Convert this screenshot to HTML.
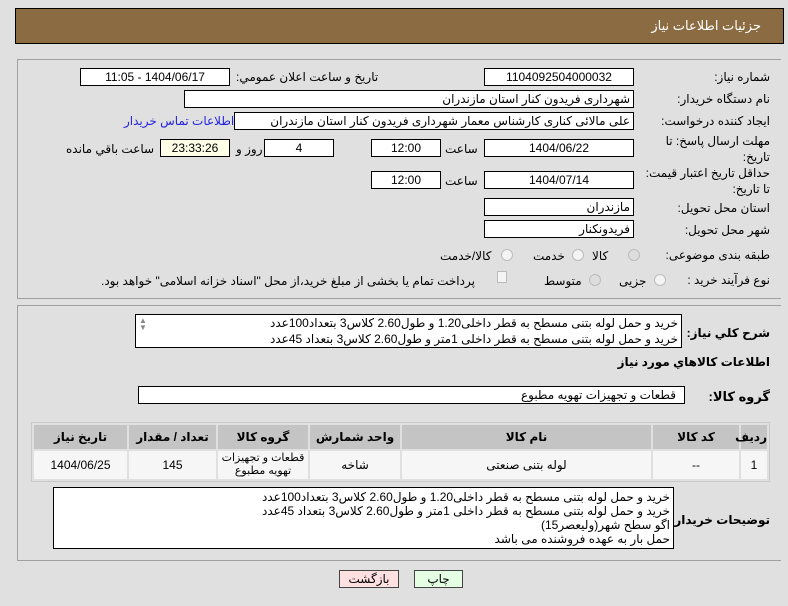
<!DOCTYPE html>
<html><head><meta charset="utf-8"><style>
*{margin:0;padding:0;box-sizing:border-box}
body{width:788px;height:606px;background:#e0e0e0;font-family:Tahoma,"Liberation Sans","DejaVu Sans",sans-serif;font-size:12px;color:#000;position:relative;overflow:hidden;direction:rtl}
.a{position:absolute;white-space:nowrap}
.hdr{left:15px;top:8px;width:769px;height:36px;background:#8b6b42;border:1px solid #000}
.hdr span{position:absolute;right:22px;top:9px;color:#fff;font-size:13px}
.pn{position:absolute;left:17px;width:764px;border:1px solid #a0a0a0;border-right:none}
.bx{position:absolute;background:#fff;border:1px solid #000;height:18px;line-height:16px;padding:0 3px;white-space:nowrap;overflow:hidden}
.c{text-align:center}
.lb{position:absolute;white-space:nowrap;right:18px}
.rd{position:absolute;width:12px;height:12px;border-radius:50%;border:1px solid #bbb;background:#f4f4f4}
table{position:absolute;left:31px;top:422px;width:739px;border-collapse:separate;border-spacing:2px;background:#e0e0e0;border:1px solid #c8c8c8;table-layout:fixed}
th{background:#c4c4c4;height:24px;font-weight:bold;font-size:12px;padding:0}
td{background:#f6f6f6;height:28px;text-align:center;font-size:12px;line-height:14px;padding:0;overflow:hidden}
.ta{position:absolute;background:#fff;border:1px solid #000;padding:1px 3px;line-height:16px;white-space:nowrap;overflow:hidden}
.btn{position:absolute;height:18px;border:1px solid #444;text-align:center;line-height:16px}
</style></head><body>
<div class="a hdr"><span>جزئیات اطلاعات نیاز</span></div>
<div class="pn" style="top:59px;height:240px"></div>
<div class="pn" style="top:305px;height:256px"></div>

<div class="lb" style="top:70px">شماره نیاز:</div>
<div class="bx c" style="left:484px;top:68px;width:150px">1104092504000032</div>
<div class="a" style="left:236px;top:70px">تاريخ و ساعت اعلان عمومي:</div>
<div class="bx c" style="left:80px;top:68px;width:150px">1404/06/17 - 11:05</div>

<div class="lb" style="top:92px">نام دستگاه خریدار:</div>
<div class="bx" style="left:184px;top:90px;width:450px;text-align:right">شهرداری فریدون کنار استان مازندران</div>

<div class="lb" style="top:114px">ایجاد کننده درخواست:</div>
<div class="bx" style="left:234px;top:112px;width:400px;text-align:right">علی مالائی کناری کارشناس معمار شهرداری فریدون کنار استان مازندران</div>
<div class="a" style="left:124px;top:114px;color:#2323e0">اطلاعات تماس خریدار</div>

<div class="lb" style="top:134px">مهلت ارسال پاسخ: تا</div>
<div class="lb" style="top:150px">تاریخ:</div>
<div class="bx c" style="left:484px;top:139px;width:150px">1404/06/22</div>
<div class="a" style="left:445px;top:142px">ساعت</div>
<div class="bx c" style="left:371px;top:139px;width:70px">12:00</div>
<div class="bx c" style="left:264px;top:139px;width:70px">4</div>
<div class="a" style="left:236px;top:142px">روز و</div>
<div class="bx c" style="left:160px;top:139px;width:70px;background:#ffffe8">23:33:26</div>
<div class="a" style="left:66px;top:142px">ساعت باقي مانده</div>

<div class="lb" style="top:166px">حداقل تاریخ اعتبار قیمت:</div>
<div class="lb" style="top:182px">تا تاریخ:</div>
<div class="bx c" style="left:484px;top:171px;width:150px">1404/07/14</div>
<div class="a" style="left:445px;top:174px">ساعت</div>
<div class="bx c" style="left:371px;top:171px;width:70px">12:00</div>

<div class="lb" style="top:201px">استان محل تحویل:</div>
<div class="bx" style="left:484px;top:198px;width:150px;text-align:right">مازندران</div>
<div class="lb" style="top:223px">شهر محل تحویل:</div>
<div class="bx" style="left:484px;top:220px;width:150px;text-align:right">فریدونکنار</div>

<div class="lb" style="top:248px">طبقه بندی موضوعی:</div>
<div class="rd" style="left:628px;top:249px;background:#ddd"></div>
<div class="a" style="left:592px;top:249px">کالا</div>
<div class="rd" style="left:572px;top:249px"></div>
<div class="a" style="left:533px;top:249px">خدمت</div>
<div class="rd" style="left:501px;top:249px"></div>
<div class="a" style="left:440px;top:249px">کالا/خدمت</div>

<div class="lb" style="top:273px">نوع فرآیند خرید :</div>
<div class="rd" style="left:654px;top:274px"></div>
<div class="a" style="left:619px;top:274px">جزیی</div>
<div class="rd" style="left:589px;top:274px;background:#ddd"></div>
<div class="a" style="left:544px;top:274px">متوسط</div>
<div class="a" style="left:497px;top:271px;width:10px;height:12px;border:1px solid #bbb;background:#f4f4f4"></div>
<div class="a" style="left:101px;top:274px">پرداخت تمام یا بخشی از مبلغ خرید،از محل "اسناد خزانه اسلامی" خواهد بود.</div>

<div class="lb" style="top:326px;font-weight:bold">شرح کلي نیاز:</div>
<div class="ta" style="left:135px;top:314px;width:547px;height:34px;text-align:right;padding-top:0">خرید و حمل لوله بتنی مسطح به قطر داخلی1.20 و طول2.60 کلاس3 بتعداد100عدد<br>خرید و حمل لوله بتنی مسطح به قطر داخلی 1متر و طول2.60 کلاس3 بتعداد 45عدد</div>
<div class="a" style="left:139px;top:317px;font-size:8px;color:#888;line-height:7px">▲<br>▼</div>

<div class="lb" style="top:355px;font-weight:bold">اطلاعات کالاهاي مورد نیاز</div>
<div class="lb" style="top:389px;font-weight:bold;font-size:13px">گروه کالا:</div>
<div class="bx" style="left:138px;top:386px;width:547px;text-align:right;padding-right:8px">قطعات و تجهیزات تهویه مطبوع</div>

<table>
<colgroup><col style="width:26px"><col style="width:86px"><col style="width:249px"><col style="width:90px"><col style="width:90px"><col style="width:87px"><col></colgroup>
<tr><th>ردیف</th><th>کد کالا</th><th>نام کالا</th><th>واحد شمارش</th><th>گروه کالا</th><th>تعداد / مقدار</th><th>تاریخ نیاز</th></tr>
<tr><td>1</td><td>--</td><td>لوله بتنی صنعتی</td><td>شاخه</td><td style="font-size:11px;line-height:13px">قطعات و تجهیزات<br>تهویه مطبوع</td><td>145</td><td>1404/06/25</td></tr>
</table>

<div class="lb" style="top:513px;font-weight:bold">توضیحات خریدار:</div>
<div class="ta" style="left:53px;top:487px;width:621px;height:62px;text-align:right;line-height:14px;padding-top:2px">خرید و حمل لوله بتنی مسطح به قطر داخلی1.20 و طول2.60 کلاس3 بتعداد100عدد<br>خرید و حمل لوله بتنی مسطح به قطر داخلی 1متر و طول2.60 کلاس3 بتعداد 45عدد<br>اگو سطح شهر(ولیعصر15)<br>حمل بار به عهده فروشنده می باشد</div>

<div class="btn" style="left:339px;top:570px;width:60px;background:#ffe0e0">بازگشت</div>
<div class="btn" style="left:414px;top:570px;width:49px;background:#e4ffe4">چاپ</div>
</body></html>
